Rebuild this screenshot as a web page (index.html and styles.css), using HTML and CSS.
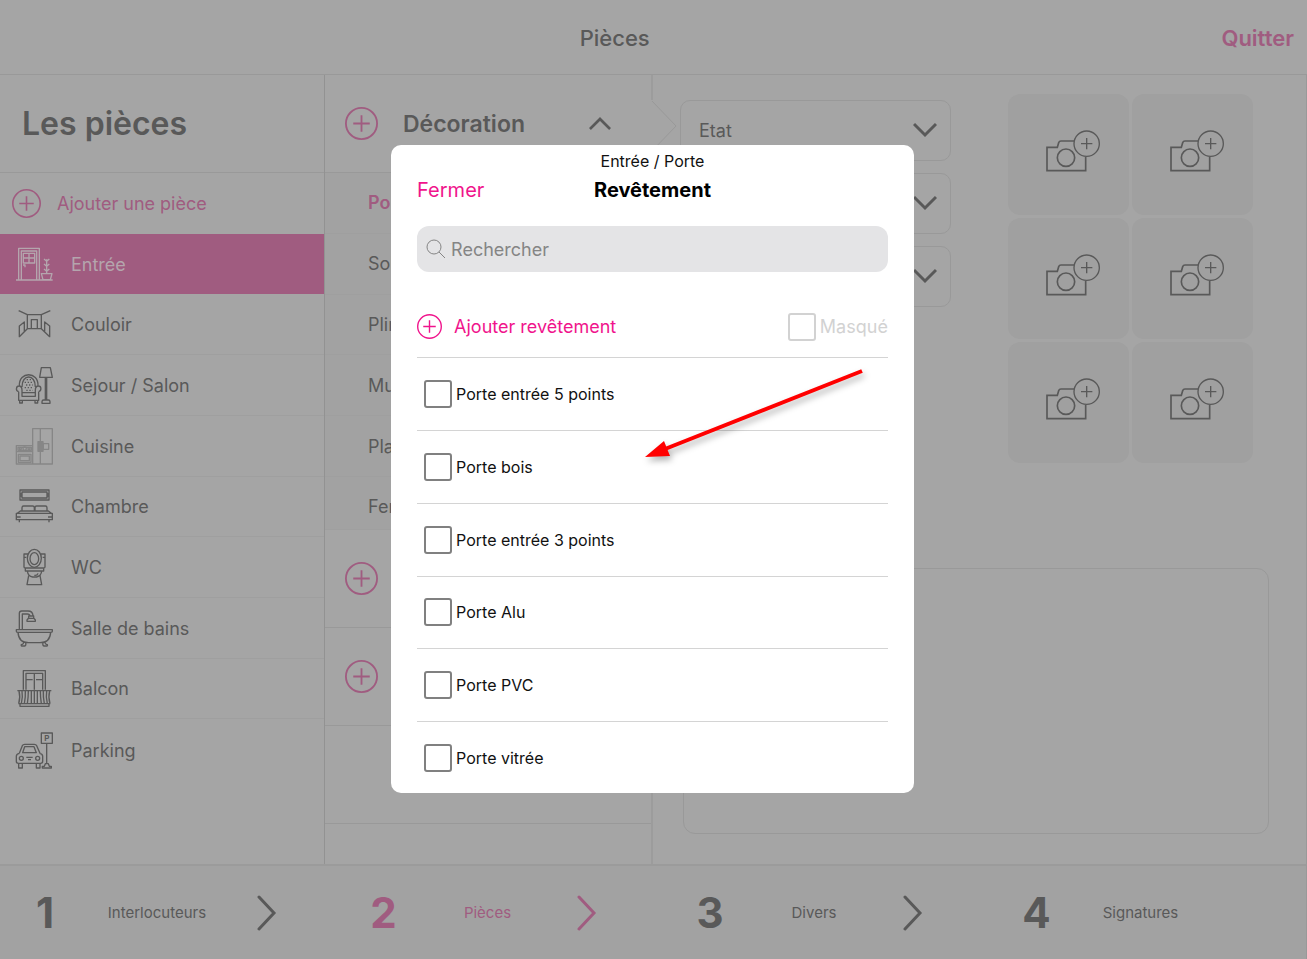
FILE: index.html
```html
<!DOCTYPE html>
<html lang="fr">
<head>
<meta charset="utf-8">
<meta name="viewport" content="width=device-width, initial-scale=1">
<title>Pièces</title>
<link rel="stylesheet" href="styles.css">
</head>
<body>
<svg class="sprite" aria-hidden="true">
  <symbol id="plus" viewBox="0 0 36 36"><circle cx="18" cy="18" r="17"/><path d="M18 9v18M9 18h18"/></symbol>
  <symbol id="camera" viewBox="0 0 162 126"><path d="M119 81V122H3V52H34L38 38Q40 33 45 33H84"/><circle cx="60" cy="83" r="26"/><circle class="thin" cx="122" cy="41" r="38"/><path class="thin" d="M122 24v34M105 41h34"/></symbol>
  <symbol id="down" viewBox="0 0 24 16"><path d="M1 2l11 11L23 2"/></symbol>
  <symbol id="next" viewBox="0 0 20 36"><path d="M2 2l15 16L2 34"/></symbol>
</svg>

<div class="app">
  <header class="topbar">
    <h1 class="topbar-title">Pièces</h1>
    <button class="quit" type="button">Quitter</button>
  </header>

  <main class="workspace">
    <nav class="rooms">
      <h2 class="rooms-title">Les pièces</h2>
      <div class="rooms-list">
        <button class="room-add" type="button"><svg class="plus plus-medium"><use href="#plus"/></svg>Ajouter une pièce</button>
        <a class="room room-active" href="#entree"><svg class="room-icon" viewBox="0 0 111 111"><path d="M8 102V7H70V102M16 102V15H62V102M22 22H56V51H22ZM39 22V51M22 36H56M21 57H27V64M0 102H110M76 83H108L103 101H81ZM92 83V40M84 39L92 46L100 39M84 54L92 61L100 54M84 69L92 76L100 69"/></svg>Entrée</a>
        <a class="room" href="#couloir"><svg class="room-icon" viewBox="0 0 111 111"><path d="M8 14L34 26H76L103 14M34 26V68H76V26M46 68V41H64V68M34 68L10 92V60L25 48V76M76 68L101 92V60L86 48V76"/></svg>Couloir</a>
        <a class="room" href="#sejour"><svg class="room-icon" viewBox="0 0 111 111"><path d="M76 2H103L109 31H71ZM88 31V99M92 31V99M78 109V104Q78 99 83 99H97Q102 99 102 104V109ZM10 57C8 12 68 12 66 57M18 60C17 20 59 20 58 60M8 74V100H68V74M8 74C-2 72 0 57 9 57C17 57 18 62 18 70V88H58V70C58 62 60 57 67 57C77 57 77 72 68 74M18 77H58M11 100V108H19V100M57 100V108H65V100"/><path class="dots" d="M32 38H48M26 46H52M30 54H50M26 62H52M31 70H50"/></svg>Sejour / Salon</a>
        <a class="room" href="#cuisine"><svg class="room-icon room-icon-light" viewBox="0 0 111 111"><path d="M50 2H109V108H50ZM73 2V108M82 47H98V64H82ZM1 53H50V108H1ZM1 71H50M7 79H45V103H7ZM12 84H40V98H12ZM6 58H46V67H6Z"/><path class="solid" d="M66 41H81V70H66Z"/><circle cx="13" cy="62" r="3"/><circle cx="26" cy="62" r="5"/><circle cx="39" cy="62" r="3"/></svg>Cuisine</a>
        <a class="room" href="#chambre"><svg class="room-icon" viewBox="0 0 111 111"><path d="M12 6H99V36H12ZM18 12H93V30H18ZM12 18H18M12 24H18M93 18H99M93 24H99M18 69V59Q18 54 23 54H50Q55 54 55 59V69M57 69V59Q57 54 62 54H88Q93 54 93 59V69M4 76L13 69H97L106 76M1 76H109V95H1ZM1 87H14M96 87H109M10 95V103M99 95V103"/></svg>Chambre</a>
        <a class="room" href="#wc"><svg class="room-icon" viewBox="0 0 111 111"><path d="M36 15H24V54Q24 57 28 57H82Q87 57 87 54V15H74M24 25H31M80 25H87M28 57H83V66H28ZM34 66Q36 82 50 84H62Q76 80 77 66M38 80L33 107H77L72 80M55 79Q64 80 66 73"/><ellipse class="mask" cx="55" cy="28" rx="21" ry="27"/><ellipse cx="55" cy="29" rx="13" ry="18"/></svg>WC</a>
        <a class="room" href="#bains"><svg class="room-icon" viewBox="0 0 111 111"><path d="M10 59V10Q10 3 17 3H36Q50 3 51 17M19 59V12H34Q41 12 42 18M38 18H53V24L58 30V34H33V30L38 24ZM36 25H55M1 59H109V64Q109 67 105 67H5Q1 67 1 64ZM6 67Q8 98 38 98H72Q102 98 104 67M22 94Q25 102 16 104Q14 108 20 108H26Q31 107 29 98M88 94Q85 102 94 104Q96 108 90 108H84Q79 107 81 98"/></svg>Salle de bains</a>
        <a class="room" href="#balcon"><svg class="room-icon" viewBox="0 0 111 111"><path d="M22 59V2H88V59M30 59V10H80V59M55 10V59M30 29H50M60 29H80M4 62H106M9 63Q14 82 8 101M18 63Q21 82 16 101M28 63Q29 82 25 101M37 63Q37 82 34 101M46 63V101M55 63V101M64 63V101M73 63Q73 82 76 101M82 63Q81 82 85 101M92 63Q89 82 94 101M101 63Q96 82 102 101M7 101H103M12 101V109H99V101"/></svg>Balcon</a>
        <a class="room" href="#parking"><svg class="room-icon" viewBox="0 0 111 111"><path d="M76 3H109V34H76ZM92 34V95M79 108V103H85L88 95H97L100 103H106V108ZM10 64L19 41Q21 37 26 37H55Q60 37 62 41L72 64M20 62L26 44H54L61 62ZM10 64Q1 66 1 73V88Q1 94 7 94H74Q80 94 80 88V73Q80 66 71 64M8 94V108H19V94M61 94V108H72V94M31 76H50M36 83H45"/><circle cx="16" cy="79" r="6"/><circle cx="65" cy="79" r="6"/><text x="85" y="27">P</text></svg>Parking</a>
      </div>
    </nav>

    <section class="groups">
      <div class="group-head">
        <button class="add" type="button" aria-label="Ajouter une décoration"><svg class="plus plus-large"><use href="#plus"/></svg></button>
        <h2 class="group-title">Décoration</h2>
        <svg class="chevron chevron-up"><use href="#down"/></svg>
      </div>
      <div class="parts">
        <a class="part part-active" href="#porte">Porte</a>
        <a class="part" href="#sol">Sol</a>
        <a class="part" href="#plinthe">Plinthe</a>
        <a class="part" href="#murs">Murs</a>
        <a class="part" href="#plafond">Plafond</a>
        <a class="part" href="#fenetre">Fenêtre</a>
      </div>
      <div class="group-row"><button class="add" type="button" aria-label="Ajouter"><svg class="plus plus-large"><use href="#plus"/></svg></button></div>
      <div class="group-row"><button class="add" type="button" aria-label="Ajouter"><svg class="plus plus-large"><use href="#plus"/></svg></button></div>
      <div class="group-row"></div>
      <svg class="pointer" viewBox="0 0 26 52"><path d="M1 1l24 25L1 51"/></svg>
    </section>

    <section class="details">
      <div class="details-top">
        <div class="fields">
          <div class="field"><select class="select" aria-label="Etat"><option>Etat</option></select><svg class="chevron chevron-field"><use href="#down"/></svg></div>
          <div class="field"><select class="select" aria-label="Revêtement"><option></option></select><svg class="chevron chevron-field"><use href="#down"/></svg></div>
          <div class="field"><select class="select" aria-label="Quantité"><option></option></select><svg class="chevron chevron-field"><use href="#down"/></svg></div>
        </div>
        <div class="photos">
          <button class="photo" type="button" aria-label="Ajouter une photo"><svg class="camera"><use href="#camera"/></svg></button>
          <button class="photo" type="button" aria-label="Ajouter une photo"><svg class="camera"><use href="#camera"/></svg></button>
          <button class="photo" type="button" aria-label="Ajouter une photo"><svg class="camera"><use href="#camera"/></svg></button>
          <button class="photo" type="button" aria-label="Ajouter une photo"><svg class="camera"><use href="#camera"/></svg></button>
          <button class="photo" type="button" aria-label="Ajouter une photo"><svg class="camera"><use href="#camera"/></svg></button>
          <button class="photo" type="button" aria-label="Ajouter une photo"><svg class="camera"><use href="#camera"/></svg></button>
        </div>
      </div>
      <textarea class="comment" aria-label="Commentaire"></textarea>
    </section>
  </main>

  <footer class="steps">
    <a class="step step-first" href="#1"><b class="step-number">1</b><span>Interlocuteurs</span><svg class="step-arrow"><use href="#next"/></svg></a>
    <a class="step step-active" href="#2"><b class="step-number">2</b><span>Pièces</span><svg class="step-arrow"><use href="#next"/></svg></a>
    <a class="step" href="#3"><b class="step-number">3</b><span>Divers</span><svg class="step-arrow"><use href="#next"/></svg></a>
    <a class="step" href="#4"><b class="step-number">4</b><span>Signatures</span></a>
  </footer>
</div>

<div class="overlay">
  <div class="dialog" role="dialog" aria-labelledby="dialog-title">
    <div class="dialog-body">
      <p class="dialog-path">Entrée / Porte</p>
      <div class="dialog-head">
        <button class="close" type="button">Fermer</button>
        <h2 class="dialog-title" id="dialog-title">Revêtement</h2>
      </div>
      <label class="search">
        <svg class="search-icon" viewBox="0 0 20 20"><circle cx="8" cy="8" r="7"/><path d="M13 13l6 6"/></svg>
        <input class="search-input" type="search" placeholder="Rechercher" aria-label="Rechercher">
      </label>
      <div class="tools">
        <button class="tool-add" type="button"><svg class="plus plus-small"><use href="#plus"/></svg>Ajouter revêtement</button>
        <label class="hidden-toggle"><input class="check" type="checkbox" disabled>Masqué</label>
      </div>
      <div class="choices">
        <label class="choice"><input class="check" type="checkbox">Porte entrée 5 points</label>
        <label class="choice"><input class="check" type="checkbox">Porte bois</label>
        <label class="choice"><input class="check" type="checkbox">Porte entrée 3 points</label>
        <label class="choice"><input class="check" type="checkbox">Porte Alu</label>
        <label class="choice"><input class="check" type="checkbox">Porte PVC</label>
        <label class="choice"><input class="check" type="checkbox">Porte vitrée</label>
      </div>
    </div>
    <svg class="arrow" viewBox="0 0 220 90"><path class="arrow-line" d="M217 1L20 79"/><path class="arrow-head" d="M0 87L19 71L25 86Z"/></svg>
  </div>
</div>
</body>
</html>
```
FILE: styles.css
```css
:root {
  --ink: #595959;
  --line: #999;
  --faint: #9f9f9f;
  --rose: #a05c80;
  --pink: #f0148c;
  --page: #a5a5a5;
}
* { box-sizing: border-box; }
body {
  margin: 0;
  background: var(--page);
  color: var(--ink);
  font-family: Inter, "Liberation Sans", sans-serif;
  font-size: 18px;
}
h1, h2, p { margin: 0; }
a { color: inherit; text-decoration: none; }
button, input, select, textarea { font: inherit; color: inherit; }
button { background: none; border: 0; padding: 0; }
svg { flex: none; fill: none; stroke: currentColor; overflow: visible; }
.sprite { position: absolute; width: 0; height: 0; }

.app { min-height: 100vh; display: flex; flex-direction: column; }
.topbar {
  height: 75px;
  padding: 2px 13px 0 8px;
  display: flex;
  align-items: center;
  border-bottom: 1px solid var(--line);
}
.topbar-title { flex: 1; text-align: center; font-size: 22px; font-weight: 500; }
.quit { color: var(--rose); font-size: 22px; font-weight: 600; }

.workspace {
  flex: 1;
  display: grid;
  grid-template-columns: 325px 328px 1fr;
  border-right: 1px solid var(--line);
}
.rooms { border-right: 1px solid #929292; }
.rooms-title {
  height: 98px;
  padding-left: 22px;
  border-bottom: 1px solid var(--line);
  font-size: 32px;
  font-weight: 600;
  line-height: 98px;
}
.rooms-list { height: 607px; display: grid; grid-template-rows: repeat(10, 1fr); }
.room-add {
  display: flex;
  align-items: center;
  gap: 16px;
  padding-left: 12px;
  color: var(--rose);
}
.room {
  display: flex;
  align-items: center;
  gap: 18px;
  padding: 1px 0 0 16px;
  border-bottom: 1px solid var(--faint);
}
.room:last-child { border-bottom: 0; }
.room-active { background: var(--rose); border-color: var(--rose); color: #b4a5ad; }
.room-icon { width: 37px; height: 37px; stroke-width: 4; stroke-linejoin: round; }
.room-icon text { font-size: 24px; font-weight: 700; fill: currentColor; stroke: none; }
.room-icon-light { color: #868686; }
.room-icon .dots { stroke-dasharray: 4 5; }
.room-icon .solid { fill: currentColor; }
.room-icon .mask { fill: var(--page); }

.plus { color: inherit; stroke-width: 2; }
.plus-small { width: 25px; height: 25px; }
.plus-medium { width: 29px; height: 29px; }
.plus-large { width: 33px; height: 33px; stroke-width: 2; }

.groups { position: relative; border-right: 2px solid #9c9c9c; }
.group-head {
  height: 98px;
  padding: 0 40px 0 20px;
  display: flex;
  align-items: center;
  border-bottom: 1px solid var(--line);
}
.add { display: flex; color: var(--rose); }
.group-title { flex: 1; padding-left: 25px; font-size: 23px; font-weight: 600; }
.chevron { stroke-width: 3; }
.chevron-up { width: 22px; height: 15px; transform: rotate(180deg); }
.parts {
  height: 357px;
  display: grid;
  grid-template-rows: repeat(5, 1fr) 53px;
  background: #a2a2a2;
}
.part {
  display: flex;
  align-items: center;
  padding-left: 43px;
  border-bottom: 1px solid var(--faint);
}
.part:last-child { padding-top: 8px; }
.part-active { color: var(--rose); font-weight: 600; }
.group-row {
  height: 98px;
  padding-left: 20px;
  display: flex;
  align-items: center;
  border-bottom: 1px solid var(--line);
}
.pointer {
  position: absolute;
  top: 25px;
  right: -26px;
  width: 26px;
  height: 52px;
  stroke: var(--line);
  background: linear-gradient(90deg, var(--page) 3px, transparent 3px);
}

.details { display: flex; flex-direction: column; padding: 19px 37px 30px 30px; }
.details-top { display: flex; gap: 57px; padding-right: 16px; margin-left: -3px; }
.fields { flex: 1; padding-top: 6px; display: flex; flex-direction: column; gap: 12px; }
.field { position: relative; height: 61px; }
.select {
  width: 100%;
  height: 100%;
  padding: 0 18px;
  appearance: none;
  background: transparent;
  border: 1px solid var(--line);
  border-radius: 10px;
}
.chevron-field { position: absolute; right: 14px; top: 22px; width: 24px; height: 16px; pointer-events: none; }
.photos {
  width: 245px;
  display: grid;
  grid-template-columns: 1fr 1fr;
  grid-auto-rows: 121px;
  gap: 3px;
}
.photo {
  display: grid;
  place-items: center;
  padding: 0 0 8px 9px;
  background: #a0a0a0;
  border-radius: 12px;
}
.camera { width: 54px; height: 42px; stroke-width: 5; }
.thin { stroke-width: 4; }
.comment {
  flex: 1;
  margin-top: 105px;
  padding: 16px;
  resize: none;
  background: transparent;
  border: 1px solid var(--line);
  border-radius: 12px;
}

.steps {
  height: 95px;
  display: grid;
  grid-template-columns: repeat(4, 1fr);
  background: #a2a2a2;
  border-top: 2px solid #9b9b9b;
  border-right: 1px solid var(--line);
  font-size: 15px;
}
.step {
  display: grid;
  grid-template-columns: 114px 94px 104px;
  align-items: center;
  justify-items: center;
}
.step-first { grid-template-columns: 90px 134px 86px; }
.step-active { color: var(--rose); }
.step-number { font-size: 42px; font-weight: 700; }
.step-arrow { width: 20px; height: 36px; stroke-width: 3; stroke-linecap: round; }

.overlay {
  position: absolute;
  inset: 0;
  padding: 0 2px 21px 0;
  display: flex;
  align-items: center;
  justify-content: center;
}
.dialog { position: relative; width: 40vw; min-width: 420px; color: #111; }
.dialog-body {
  padding: 6px 26px 0;
  height: 648px;
  overflow: hidden;
  background: #fff;
  border-radius: 10px;
}
.dialog-path { height: 21px; line-height: 21px; text-align: center; font-size: 16px; }
.dialog-head {
  height: 36px;
  display: grid;
  grid-template-columns: 1fr auto 1fr;
  align-items: center;
}
.close { justify-self: start; color: var(--pink); font-size: 20px; }
.dialog-title { font-size: 20px; font-weight: 700; color: #000; }
.search {
  height: 46px;
  margin-top: 18px;
  padding: 0 9px;
  display: flex;
  align-items: center;
  gap: 5px;
  background: #e4e4e6;
  border-radius: 12px;
  color: #858585;
}
.search-icon { width: 20px; height: 20px; }
.search-input { flex: 1; min-width: 0; padding: 0; border: 0; outline: 0; background: none; }
.search-input::placeholder { color: #858585; opacity: 1; }
.tools {
  height: 85px;
  padding-top: 24px;
  display: flex;
  align-items: center;
  justify-content: space-between;
}
.tool-add { display: flex; align-items: center; gap: 12px; color: var(--pink); }
.hidden-toggle { display: flex; align-items: center; gap: 4px; color: #d2d2d2; }
.check {
  appearance: none;
  width: 28px;
  height: 28px;
  margin: 0;
  flex: none;
  background: #fff;
  border: 2px solid #808080;
  border-radius: 3px;
}
.check:disabled { border-color: #d2d2d2; }
.choices { height: 437px; display: grid; grid-template-rows: repeat(6, 1fr); }
.choice {
  display: flex;
  align-items: center;
  gap: 4px;
  padding-left: 7px;
  border-top: 1px solid #d4d4d4;
  font-size: 16px;
}
.arrow {
  position: absolute;
  left: 254px;
  top: 225px;
  width: 220px;
  height: 90px;
  pointer-events: none;
  filter: drop-shadow(2px 4px 3px rgba(0, 0, 0, 0.3));
}
.arrow-line { stroke: #f00; stroke-width: 4; }
.arrow-head { fill: #f00; stroke: none; }
```
